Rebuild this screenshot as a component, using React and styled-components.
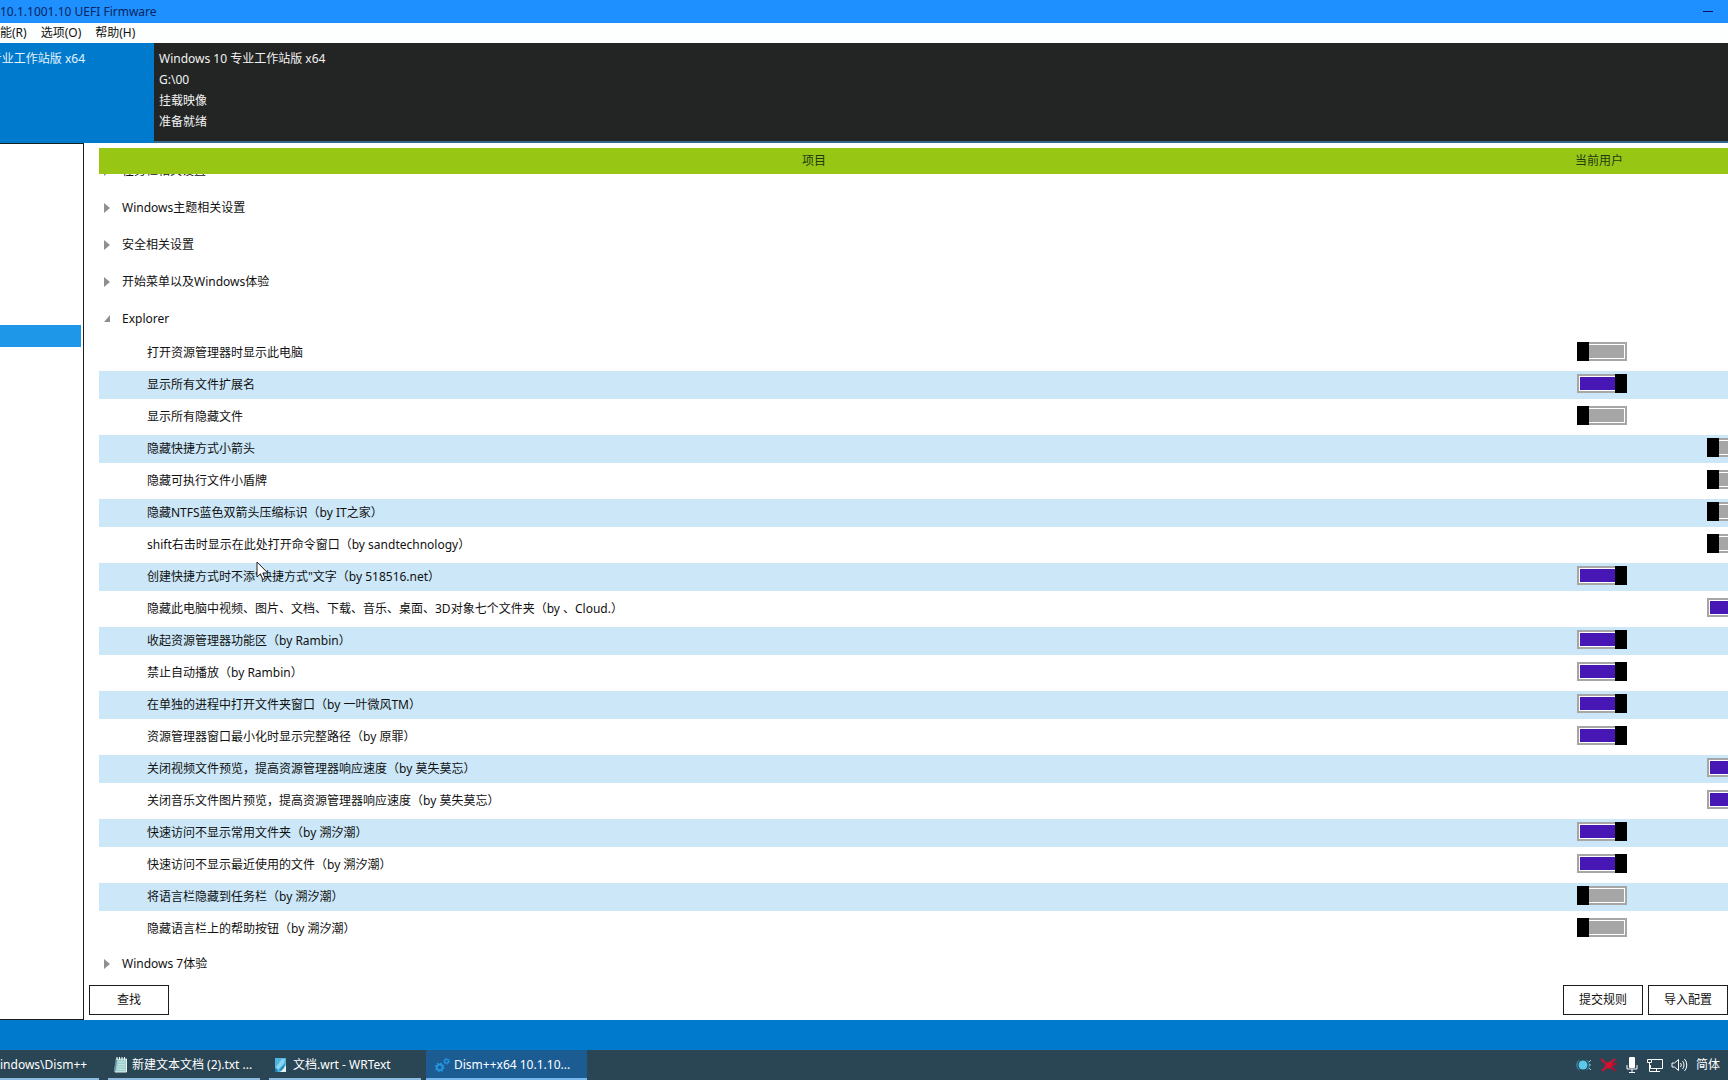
import React, { useState } from "react";
import styled, { createGlobalStyle } from "styled-components";

const GlobalStyle = createGlobalStyle`
  * {
    box-sizing: border-box;
  }
  body {
    margin: 0;
    overflow: hidden;
    background: #ffffff;
  }
  body, button, input {
    font-family: "Noto Sans", "Noto Sans CJK SC", sans-serif;
    font-size: 12px;
    color: #111111;
  }
`;

const collapsedGroups = ["任务栏相关设置", "Windows主题相关设置", "安全相关设置", "开始菜单以及Windows体验"];

// scope: which column the switch sits in
const explorerItems = [
  { text: "打开资源管理器时显示此电脑", scope: "user", on: false },
  { text: "显示所有文件扩展名", scope: "user", on: true },
  { text: "显示所有隐藏文件", scope: "user", on: false },
  { text: "隐藏快捷方式小箭头", scope: "all", on: false },
  { text: "隐藏可执行文件小盾牌", scope: "all", on: false },
  { text: "隐藏NTFS蓝色双箭头压缩标识（by IT之家）", scope: "all", on: false },
  { text: "shift右击时显示在此处打开命令窗口（by sandtechnology）", scope: "all", on: false },
  { text: '创建快捷方式时不添"快捷方式"文字（by 518516.net）', scope: "user", on: true },
  { text: "隐藏此电脑中视频、图片、文档、下载、音乐、桌面、3D对象七个文件夹（by 、Cloud.）", scope: "all", on: true },
  { text: "收起资源管理器功能区（by Rambin）", scope: "user", on: true },
  { text: "禁止自动播放（by Rambin）", scope: "user", on: true },
  { text: "在单独的进程中打开文件夹窗口（by 一叶微风TM）", scope: "user", on: true },
  { text: "资源管理器窗口最小化时显示完整路径（by 原罪）", scope: "user", on: true },
  { text: "关闭视频文件预览，提高资源管理器响应速度（by 莫失莫忘）", scope: "all", on: true },
  { text: "关闭音乐文件图片预览，提高资源管理器响应速度（by 莫失莫忘）", scope: "all", on: true },
  { text: "快速访问不显示常用文件夹（by 溯汐潮）", scope: "user", on: true },
  { text: "快速访问不显示最近使用的文件（by 溯汐潮）", scope: "user", on: true },
  { text: "将语言栏隐藏到任务栏（by 溯汐潮）", scope: "user", on: false },
  { text: "隐藏语言栏上的帮助按钮（by 溯汐潮）", scope: "user", on: false },
];

function GroupRow({ label, open }) {
  return (
    <Group>
      <td>
        <GroupButton type="button" aria-expanded={!!open}>
          <svg width="8" height="12" viewBox="0 0 8 12" aria-hidden="true">
            {open ? <path d="M6 2V9H0Z" fill="#8f8f8f" /> : <path d="M0 1L6 6L0 11Z" fill="#8f8f8f" />}
          </svg>
          {label}
        </GroupButton>
      </td>
    </Group>
  );
}

function SettingRow({ id, item, striped }) {
  const [on, setOn] = useState(item.on);
  const toggle = (
    <Switch id={id} type="checkbox" role="switch" checked={on} onChange={() => setOn(!on)} />
  );
  return (
    <Setting $striped={striped}>
      <NameCell>
        <label htmlFor={id}>{item.text}</label>
      </NameCell>
      <SwitchCell>{item.scope === "user" ? toggle : null}</SwitchCell>
      <SwitchCell>{item.scope === "all" ? toggle : null}</SwitchCell>
    </Setting>
  );
}

export default function App() {
  return (
    <Desktop>
      <GlobalStyle />
      <TitleBar>
        <span>10.1.1001.10 UEFI Firmware</span>
        <MinimizeButton type="button" aria-label="最小化">
          <svg width="10" height="2" viewBox="0 0 10 2">
            <path d="M0 0H10V1H0Z" fill="#101060" />
          </svg>
        </MinimizeButton>
      </TitleBar>
      <MenuBar>
        <MenuButton type="button">能(R)</MenuButton>
        <MenuButton type="button">选项(O)</MenuButton>
        <MenuButton type="button">帮助(H)</MenuButton>
      </MenuBar>
      <ImageHeader>
        <ImageTab type="button">
          <span>专业工作站版 x64</span>
        </ImageTab>
        <ImageInfo>
          <div>Windows 10 专业工作站版 x64</div>
          <div>G:\00</div>
          <div>挂载映像</div>
          <div>准备就绪</div>
        </ImageInfo>
      </ImageHeader>
      <Workspace>
        <Nav>
          <NavSelected />
        </Nav>
        <Content>
          <Table>
            <TableHead>
              <tr>
                <th>项目</th>
                <th>当前用户</th>
              </tr>
            </TableHead>
            <TableBody>
              {collapsedGroups.map((label) => (
                <GroupRow key={label} label={label} />
              ))}
              <GroupRow label="Explorer" open />
              {explorerItems.map((item, i) => (
                <SettingRow key={item.text} id={`setting-${i}`} item={item} striped={i % 2 === 1} />
              ))}
              <GroupRow label="Windows 7体验" />
            </TableBody>
          </Table>
          <Actions>
            <ActionButton type="button">查找</ActionButton>
            <ActionGroup>
              <ActionButton type="button">提交规则</ActionButton>
              <ActionButton type="button">导入配置</ActionButton>
            </ActionGroup>
          </Actions>
        </Content>
      </Workspace>
      <StatusBar />
      <Taskbar>
        <Tasks>
          <Task type="button" $first>
            indows\Dism++
          </Task>
          <Task type="button">
            <NotepadIcon />
            新建文本文档 (2).txt ...
          </Task>
          <Task type="button">
            <DocIcon />
            文档.wrt - WRText
          </Task>
          <Task type="button" $active>
            <GearsIcon />
            Dism++x64 10.1.10...
          </Task>
        </Tasks>
        <Tray>
          <CameraIcon />
          <RedIcon />
          <MicIcon />
          <NetworkIcon />
          <SpeakerIcon />
          <span>简体</span>
        </Tray>
      </Taskbar>
      <Cursor width="14" height="20" viewBox="0 0 14 20" aria-hidden="true">
        <path
          d="M1 1V16L4.400 12.800L6.800 18.500L9.200 17.500L6.800 12H11.800Z"
          fill="#ffffff"
          stroke="#222222"
        />
      </Cursor>
    </Desktop>
  );
}

function NotepadIcon() {
  return (
    <svg width="15" height="16" viewBox="0 0 15 16" aria-hidden="true">
      <path d="M3 1.500H14V15H1Z" fill="#9fcfcf" />
      <path d="M3.500 2L1.500 15" stroke="#5f8f98" strokeWidth="1.500" />
      <path d="M5 5H12M5 7.500H12M4.500 10H12M4.500 12.500H12" stroke="#c4e4e2" />
      <path d="M13.500 2V15H2" stroke="#e8f4f4" fill="none" />
      <path d="M4 0V3M6.500 0V3M9 0V3M11.500 0V3" stroke="#ffffff" />
    </svg>
  );
}

function DocIcon() {
  return (
    <svg width="15" height="16" viewBox="0 0 15 16" aria-hidden="true">
      <path d="M1 1H12V15H1Z" fill="#4fb4e0" />
      <path d="M2 10L8 2H11L10 6L4 13Z" fill="#8ad6f2" />
      <path d="M1 11L4 13L3 15H1Z" fill="#1d7fb4" />
      <path d="M6 15L12 8V15Z" fill="#e6f2f0" />
      <path d="M5 13L11 7L10 11L7 14Z" fill="#2388bd" />
    </svg>
  );
}

function GearsIcon() {
  return (
    <svg width="15" height="16" viewBox="0 0 16 16" fill="none" aria-hidden="true">
      <circle cx="5" cy="10.500" r="3" stroke="#2495e0" strokeWidth="2" />
      <circle cx="5" cy="10.500" r="4.500" stroke="#2495e0" strokeWidth="1.400" strokeDasharray="1.800 1.734" />
      <circle cx="12.300" cy="4" r="2" stroke="#2495e0" strokeWidth="1.500" />
      <circle cx="12.300" cy="4" r="3.100" stroke="#2495e0" strokeWidth="1" strokeDasharray="1.600 1.646" />
    </svg>
  );
}

function CameraIcon() {
  return (
    <svg width="16" height="16" viewBox="0 0 16 16" fill="none" aria-hidden="true">
      <circle cx="7" cy="8" r="4.500" fill="#5cc9ea" />
      <path d="M3.500 3A6 6 0 0 0 3.500 13M10.500 3A6 6 0 0 1 10.500 13" stroke="#3f9dbd" />
      <path d="M13 5L15 3M13 8H15M13 11L15 13" stroke="#7fd3ea" />
    </svg>
  );
}

function RedIcon() {
  return (
    <svg width="18" height="16" viewBox="0 0 18 16" fill="none" aria-hidden="true">
      <path d="M5 6L12 4L14 8L10 12L5 11Z" fill="#cf1030" />
      <path d="M1 2L5 6M2 14L15 2" stroke="#d5122e" strokeWidth="2" />
      <path d="M12 7H17M11 10L16 14" stroke="#b01030" strokeWidth="2" />
    </svg>
  );
}

function MicIcon() {
  return (
    <svg width="12" height="18" viewBox="0 0 12 18" fill="none" aria-hidden="true">
      <rect x="3" y="1" width="6" height="11" rx="1" fill="#ffffff" />
      <path d="M1 9V13H11V9M6 13V16M3 16.500H9" stroke="#ffffff" />
    </svg>
  );
}

function NetworkIcon() {
  return (
    <svg width="17" height="16" viewBox="0 0 17 16" fill="none" stroke="#ffffff" aria-hidden="true">
      <path d="M6 2.500H16.500V11.500H4.500V8M10.500 11.500V14.500M7 14.500H14" />
      <path d="M1.500 2.500H5.500V5.500H1.500ZM3.500 5.500V14.500H7" />
    </svg>
  );
}

function SpeakerIcon() {
  return (
    <svg width="17" height="16" viewBox="0 0 17 16" fill="none" stroke="#ffffff" aria-hidden="true">
      <path d="M1 6H3.500L7.500 2.500V13.500L3.500 10H1Z" />
      <path d="M9.500 6A3 3 0 0 1 9.500 10M11.500 4A6 6 0 0 1 11.500 12M13.500 2A9 9 0 0 1 13.500 14" />
    </svg>
  );
}

const Desktop = styled.div`
  position: relative;
  display: flex;
  flex-direction: column;
  height: 100vh;
  overflow: hidden;
  white-space: nowrap;
`;

const TitleBar = styled.header`
  display: flex;
  align-items: center;
  justify-content: space-between;
  height: 23px;
  padding-right: 9px;
  background: #1e90ff;
  color: #0b2560;
`;

const MinimizeButton = styled.button`
  display: flex;
  align-items: center;
  justify-content: center;
  width: 22px;
  height: 20px;
  padding: 0;
  border: 0;
  background: none;
`;

const MenuBar = styled.nav`
  display: flex;
  gap: 14px;
  height: 20px;
  background: #fdfffe;
`;

const MenuButton = styled.button`
  padding: 0;
  border: 0;
  background: none;
  line-height: 20px;
`;

const ImageHeader = styled.section`
  display: flex;
  height: 100px;
`;

const ImageTab = styled.button`
  display: flex;
  align-items: flex-start;
  justify-content: flex-end;
  width: 154px;
  padding: 5px 69px 0 0;
  border: 0;
  overflow: hidden;
  background: #007acc;
  color: #e6f4ff;
  line-height: 21px;
`;

const ImageInfo = styled.div`
  flex: 1;
  padding: 5px 5px 0;
  border-bottom: 2px solid #35678a;
  background: #222524;
  color: #f2f2f2;
  line-height: 21px;
`;

const Workspace = styled.main`
  display: flex;
  flex: 1;
  min-height: 0;
`;

const Nav = styled.aside`
  width: 84px;
  padding: 181px 2px 0 0;
  border: 1px solid #1c1c1c;
  border-left: 0;
`;

const NavSelected = styled.div`
  height: 22px;
  background: #1e97e8;
`;

const Content = styled.section`
  display: flex;
  flex: 1;
  flex-direction: column;
  gap: 3px;
  min-width: 0;
  padding: 5px 0 5px 5px;
`;

const Table = styled.table`
  display: flex;
  flex: 1;
  flex-direction: column;
  min-height: 0;
  margin-left: 10px;
`;

const TableHead = styled.thead`
  display: block;
  background: #97c615;
  tr {
    display: grid;
    grid-template-columns: 1fr 140px 59px;
  }
  th {
    padding: 0;
    color: #1f3a14;
    font-weight: 400;
    line-height: 26px;
  }
`;

/* list stays scrolled to its end, so the top group is cut by the header */
const TableBody = styled.tbody`
  display: flex;
  flex: 1;
  flex-direction: column;
  justify-content: flex-end;
  min-height: 0;
  overflow: hidden;
`;

const Group = styled.tr`
  display: block;
  flex-shrink: 0;
  td {
    display: block;
    padding: 0;
  }
`;

const GroupButton = styled.button`
  display: flex;
  align-items: center;
  gap: 10px;
  height: 37px;
  padding: 0 0 0 5px;
  border: 0;
  background: none;
  line-height: 36px;
`;

const Setting = styled.tr`
  display: grid;
  flex-shrink: 0;
  grid-template-columns: 1fr 130px 61px;
  height: 28px;
  margin: 2px 0;
  background: ${(props) => (props.$striped ? "#cbe7f8" : "transparent")};
`;

const NameCell = styled.td`
  padding: 0 0 0 48px;
  line-height: 28px;
`;

const SwitchCell = styled.td`
  padding: 3px 0 0 40px;
`;

const Switch = styled.input`
  appearance: none;
  position: relative;
  display: block;
  width: 50px;
  height: 19px;
  margin: 0;
  border: 2px solid #a6a6a6;
  background: ${(props) => (props.checked ? "#4617b4" : "#a6a6a6")};
  box-shadow: inset 0 0 0 1px #ffffff;
  &::after {
    content: "";
    position: absolute;
    top: -2px;
    bottom: -2px;
    ${(props) => (props.checked ? "right" : "left")}: -2px;
    width: 12px;
    background: #000000;
  }
`;

const Actions = styled.div`
  display: flex;
  justify-content: space-between;
`;

const ActionGroup = styled.div`
  display: flex;
  gap: 5px;
`;

const ActionButton = styled.button`
  width: 80px;
  height: 30px;
  padding: 0;
  border: 1px solid #1c1c1c;
  background: #ffffff;
  line-height: 28px;
`;

const StatusBar = styled.div`
  height: 30px;
  background: #007acc;
`;

const Taskbar = styled.footer`
  display: flex;
  justify-content: space-between;
  height: 30px;
  background: #2a4554;
  color: #ffffff;
`;

const Tasks = styled.div`
  display: flex;
`;

const Task = styled.button`
  position: relative;
  display: flex;
  align-items: center;
  gap: 4px;
  width: ${(props) => (props.$first ? 104 : 161)}px;
  padding: 0 0 0 ${(props) => (props.$first ? 0 : 9)}px;
  border: 0;
  background: ${(props) => (props.$active ? "#1b5c93" : "transparent")};
  color: #ffffff;
  line-height: 30px;
  &::after {
    content: "";
    position: absolute;
    right: ${(props) => (props.$active ? 0 : 5)}px;
    bottom: 0;
    left: ${(props) => (props.$active || props.$first ? 0 : 4)}px;
    height: 2px;
    background: ${(props) => (props.$active ? "#76b9ed" : "#8fbbe0")};
  }
`;

const Tray = styled.div`
  display: flex;
  align-items: center;
  gap: 8px;
  padding-right: 8px;
  line-height: 30px;
`;

const Cursor = styled.svg`
  position: absolute;
  left: 256px;
  top: 561px;
`;
